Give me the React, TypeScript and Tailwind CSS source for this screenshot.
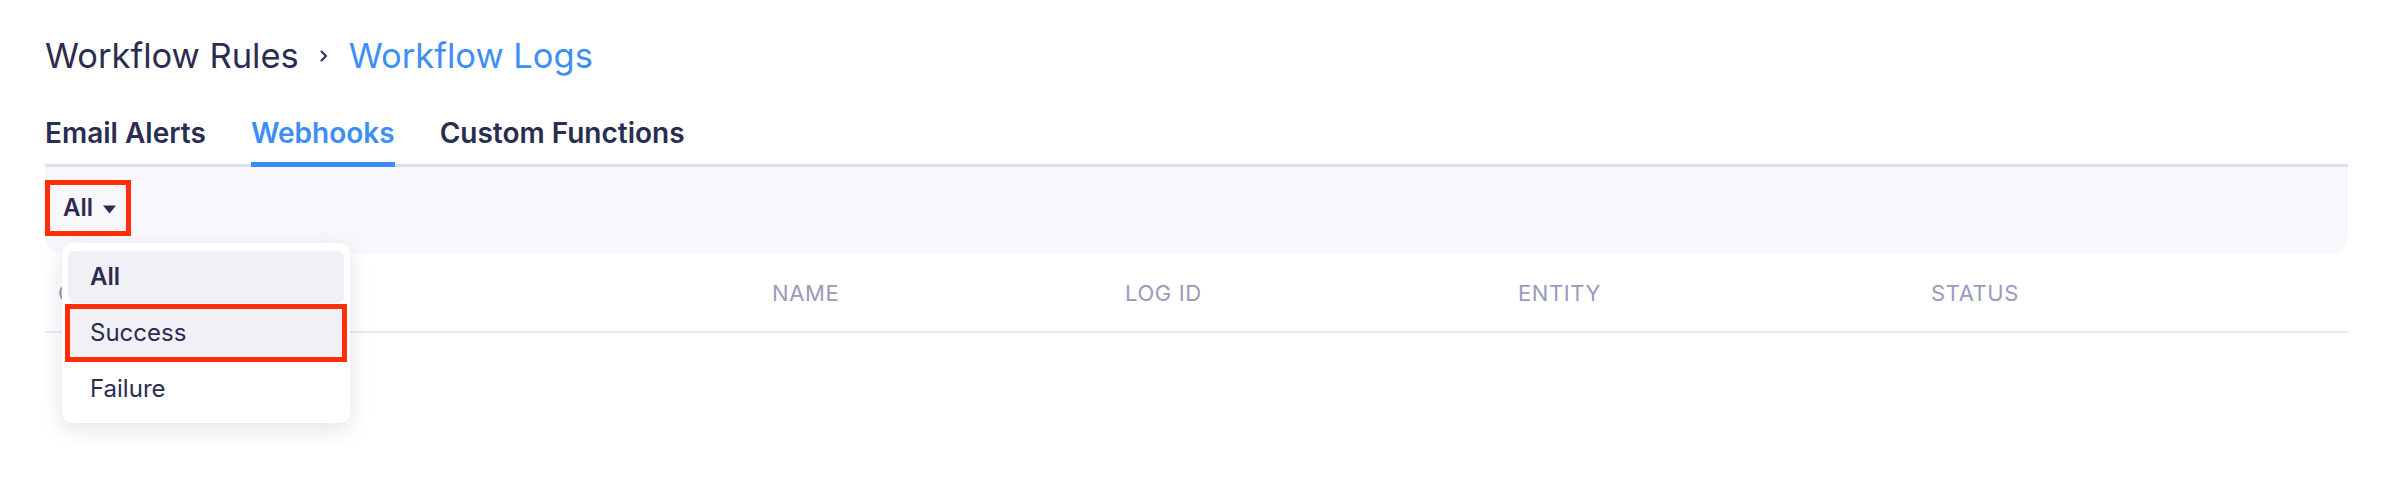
const tabs = ["Email Alerts", "Webhooks", "Custom Functions"];
const options = ["All", "Success", "Failure"];

function Chevron() {
  return (
    <svg width="10" height="12" viewBox="0 0 10 12" fill="none" className="mx-[20px]">
      <polyline points="2.5,1.5 7,6 2.5,10.5" stroke="#2b2d50" strokeWidth="2" strokeLinecap="round" strokeLinejoin="round" />
    </svg>
  );
}

function Caret() {
  return (
    <svg width="13" height="9" viewBox="0 0 13 9" className="ml-[10px] mt-[3px]">
      <polygon points="0,0.5 13,0.5 6.5,8.5" fill="#2b2d50" />
    </svg>
  );
}

export default function App() {
  return (
    <div className="min-h-[478px] bg-white pl-[45px] pr-[34px] pt-[38px] font-['Inter',sans-serif] text-[#2b2d50]">
      <div className="flex h-[36px] items-center text-[34.5px] leading-[36px]">
        <span>Workflow Rules</span>
        <Chevron />
        <span className="text-[#3d8ef5]">Workflow Logs</span>
      </div>

      <div className="mt-[45px] flex gap-[45px] border-b-[3px] border-[#dfdff2]">
        {tabs.map((t) => (
          <div
            key={t}
            className={
              t === "Webhooks"
                ? "-mb-[3px] border-b-[5px] border-[#3b8cf5] pb-[15px] text-[28px] font-semibold leading-[28px] text-[#3d8ef5]"
                : "-mb-[3px] border-b-[5px] border-transparent pb-[15px] text-[28px] font-semibold leading-[28px]"
            }
          >
            {t}
          </div>
        ))}
      </div>

      <div className="relative">
        <div className="h-[86px] rounded-b-[16px] bg-[#f8f8fc] pt-[13px]">
          <button className="flex h-[56px] items-center border-[5px] border-[#ff2d0a] pl-[13px] pr-[10px] text-[24px] font-semibold leading-[24px]">
            All
            <Caret />
          </button>
        </div>

        <div className="absolute left-[17px] top-[76px] z-10 flex h-[180px] w-[288px] flex-col gap-[4px] rounded-[10px] bg-white px-[6px] pt-[8px] shadow-[0_6px_22px_rgba(40,40,100,0.13)]">
          {options.map((o) => (
            <div
              key={o}
              className={
                o === "All"
                  ? "flex h-[52px] items-center rounded-[7px] bg-[#f0f0f6] pl-[22px] text-[24px] font-semibold"
                  : o === "Success"
                  ? "flex h-[52px] items-center bg-[#f0f0f6] pl-[22px] text-[24px] outline outline-[5px] outline-offset-[-2px] outline-[#ff2d0a]"
                  : "flex h-[52px] items-center pl-[22px] text-[24px]"
              }
            >
              {o}
            </div>
          ))}
        </div>

        <div className="grid h-[80px] grid-cols-[714px_353px_393px_413px_1fr] border-b-2 border-[#ebe9f6] pl-[13px] pt-[29px] text-[22px] leading-[22px] tracking-[0.6px] text-[#9a9abc]">
          <div>CREATED TIME</div>
          <div>NAME</div>
          <div>LOG ID</div>
          <div>ENTITY</div>
          <div>STATUS</div>
        </div>
      </div>
    </div>
  );
}
